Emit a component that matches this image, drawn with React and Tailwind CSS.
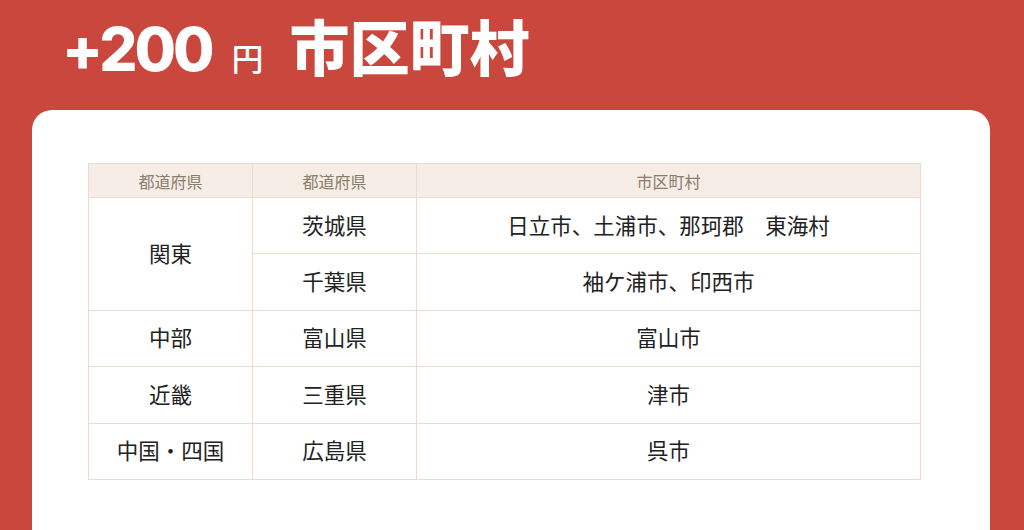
import React from 'react';

const rows = [
  { region: '関東', pref: '茨城県', city: '日立市、土浦市、那珂郡　東海村', span: 2 },
  { pref: '千葉県', city: '袖ケ浦市、印西市' },
  { region: '中部', pref: '富山県', city: '富山市', span: 1 },
  { region: '近畿', pref: '三重県', city: '津市', span: 1 },
  { region: '中国・四国', pref: '広島県', city: '呉市', span: 1 },
];

const jp = { fontFamily: '"Noto Sans CJK JP", "Noto Sans", sans-serif' };

const App = () => {
  return (
    <div className="w-[1024px] h-[530px] overflow-hidden bg-[#c9473d]" style={jp}>
      <div className="flex items-baseline h-[110px] pl-[62px] pt-[4px] text-white">
        <span className="text-[60px] font-extrabold tracking-[-3px]" style={{ fontFamily: 'Inter, "Noto Sans", sans-serif' }}>+200</span>
        <span className="ml-[20px] text-[32px] font-medium">円</span>
        <span className="ml-[26px] text-[60px] font-black leading-none">市区町村</span>
      </div>
      <div className="ml-[32px] w-[958px] h-[440px] bg-white rounded-t-[20px] pt-[53px] pl-[56px]">
        <table className="border-collapse w-[833px] text-center">
          <thead>
            <tr className="bg-[#f5ede6] text-[#8b7d6b] text-[16px]">
              <th className="w-[164px] h-[34px] border border-[#ecdccc] font-normal">都道府県</th>
              <th className="w-[164px] border border-[#ecdccc] font-normal">都道府県</th>
              <th className="border border-[#ecdccc] font-normal">市区町村</th>
            </tr>
          </thead>
          <tbody className="text-[21.5px] text-[#222]">
            {rows.map((r, i) => (
              <tr key={i} className="h-[56.4px]">
                {r.region && (
                  <td rowSpan={r.span} className="border border-[#ecdccc] pb-[2px]">{r.region}</td>
                )}
                <td className="border border-[#ecdccc] pb-[2px]">{r.pref}</td>
                <td className="border border-[#ecdccc] pb-[2px]">{r.city}</td>
              </tr>
            ))}
          </tbody>
        </table>
      </div>
    </div>
  );
};

export default App;
